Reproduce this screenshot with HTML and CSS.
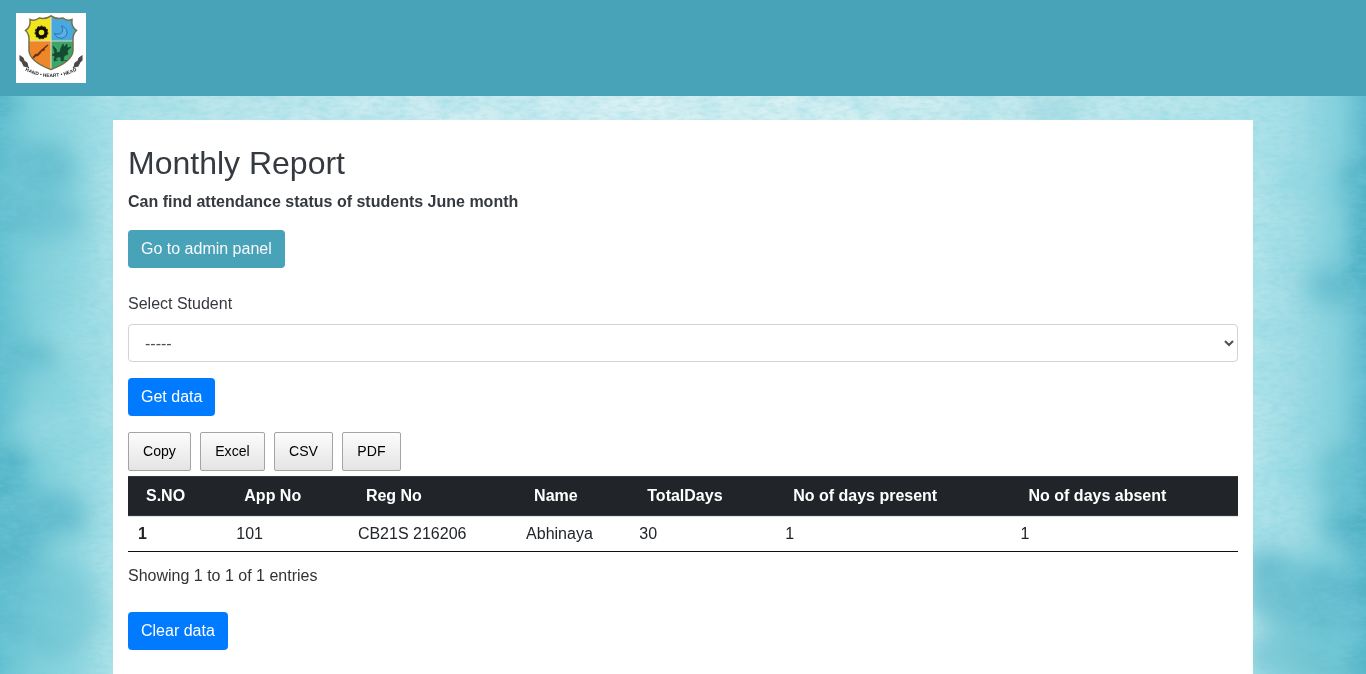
FILE: index.html
```html
<!DOCTYPE html>
<html lang="en">
<head>
<meta charset="utf-8">
<title>Monthly Report</title>
<link rel="stylesheet" href="styles.css">
</head>
<body>
<svg class="backdrop" viewBox="0 0 1366 674" preserveAspectRatio="none" aria-hidden="true">
  <defs>
    <linearGradient id="wash">
      <stop offset="0" stop-color="#62bfcf"/>
      <stop offset=".025" stop-color="#80d0db"/>
      <stop offset=".055" stop-color="#92d8e1"/>
      <stop offset=".08" stop-color="#abe1e8"/>
      <stop offset=".2" stop-color="#c3e9ee"/>
      <stop offset=".35" stop-color="#d2eef2"/>
      <stop offset=".55" stop-color="#dbf2f4"/>
      <stop offset=".75" stop-color="#c6eaee"/>
      <stop offset=".92" stop-color="#b2e4eb"/>
      <stop offset=".95" stop-color="#a0dce5"/>
      <stop offset=".98" stop-color="#84d0dc"/>
      <stop offset="1" stop-color="#5db8cc"/>
    </linearGradient>
    <filter id="soft" x="-50%" y="-50%" width="200%" height="200%"><feGaussianBlur stdDeviation="11"/></filter>
    <filter id="blotch" x="0" y="0" width="100%" height="100%">
      <feTurbulence type="fractalNoise" baseFrequency=".022 .035" numOctaves="5" seed="8"/>
      <feColorMatrix values="0 0 0 0 .22  0 0 0 0 .66  0 0 0 0 .75  1.8 0 0 0 -.7"/>
    </filter>
    <filter id="grain" x="0" y="0" width="100%" height="100%">
      <feTurbulence type="fractalNoise" baseFrequency=".1 .26" numOctaves="3" seed="4"/>
      <feColorMatrix values="0 0 0 0 .2  0 0 0 0 .6  0 0 0 0 .7  1 0 0 0 -.4"/>
    </filter>
  </defs>
  <rect width="1366" height="674" fill="url(#wash)"/>
  <g filter="url(#soft)">
    <g fill="#48acc2">
      <ellipse cx="45" cy="170" rx="32" ry="28" opacity=".5"/>
      <ellipse cx="45" cy="218" rx="42" ry="22" opacity=".4"/>
      <ellipse cx="0" cy="105" rx="12" ry="40" opacity=".6"/>
      <ellipse cx="28" cy="355" rx="30" ry="14" opacity=".5"/>
      <ellipse cx="8" cy="475" rx="26" ry="24" opacity=".8"/>
      <ellipse cx="50" cy="515" rx="38" ry="24" opacity=".6"/>
      <ellipse cx="15" cy="545" rx="28" ry="28" opacity=".55"/>
      <ellipse cx="50" cy="610" rx="50" ry="50" opacity=".3"/>
      <ellipse cx="1362" cy="185" rx="24" ry="24" opacity=".65"/>
      <ellipse cx="1370" cy="250" rx="22" ry="38" opacity=".75"/>
      <ellipse cx="1335" cy="285" rx="30" ry="20" opacity=".5"/>
      <ellipse cx="1345" cy="475" rx="28" ry="30" opacity=".45"/>
      <ellipse cx="1355" cy="525" rx="32" ry="24" opacity=".7"/>
      <ellipse cx="1265" cy="563" rx="25" ry="15" opacity=".6"/>
      <ellipse cx="1310" cy="595" rx="65" ry="35" opacity=".6"/>
      <ellipse cx="1310" cy="655" rx="65" ry="30" opacity=".45"/>
      <ellipse cx="1050" cy="110" rx="28" ry="9" opacity=".3"/>
    </g>
    <g fill="#b2e4eb">
      <ellipse cx="92" cy="330" rx="42" ry="22" opacity=".4"/>
      <ellipse cx="45" cy="425" rx="32" ry="18" opacity=".3"/>
    </g>
  </g>
  <rect width="1366" height="674" filter="url(#blotch)" opacity=".38"/>
  <rect width="1366" height="674" filter="url(#grain)" opacity=".6"/>
</svg>

<header class="navbar">
  <svg class="logo" viewBox="0 0 70 70" role="img" aria-label="School crest">
    <defs>
      <clipPath id="shield"><path d="M14 6.500Q19 8.500 23 5Q30 6.500 35 2.800Q40 6.500 47 5Q51 8.500 56 6.500Q55 14 60.500 17.500Q56.500 21 57 28V38C56 47 46 52.500 35 56.500C24 52.500 14 47 13 38V28Q13.500 21 9.500 17.500Q15 14 14 6.500Z"/></clipPath>
      <filter id="smooth"><feGaussianBlur stdDeviation=".35"/></filter>
    </defs>
    <rect width="70" height="70" fill="#fff"/>
    <g filter="url(#smooth)">
      <g clip-path="url(#shield)">
        <path fill="#f3e51c" d="M8 0h27v28H8z"/>
        <path fill="#48a9df" d="M35 0h27v28H35z"/>
        <path fill="#ee862b" d="M8 28h27v30H8z"/>
        <path fill="#3aa667" d="M35 28h27v30H35z"/>
        <path d="M35 3v54M9 28h52" stroke="#d9dcc0" stroke-width="1.200"/>
      </g>
      <path d="M14 6.500Q19 8.500 23 5Q30 6.500 35 2.800Q40 6.500 47 5Q51 8.500 56 6.500Q55 14 60.500 17.500Q56.500 21 57 28V38C56 47 46 52.500 35 56.500C24 52.500 14 47 13 38V28Q13.500 21 9.500 17.500Q15 14 14 6.500Z" fill="none" stroke="#77704a" stroke-width="1.500"/>
      <circle cx="25.500" cy="19.500" r="4.500" fill="none" stroke="#111" stroke-width="3.400"/>
      <circle cx="25.500" cy="19.500" r="6.300" fill="none" stroke="#222" stroke-width="1.200" stroke-dasharray="2 1.500"/>
      <path d="M45.500 13c3 5 0 10-7 7.500 2 6 11 6.500 12.500 0 .5-4-2.500-7-5.500-7.500z" fill="#58b2e6" stroke="#246c9c" stroke-width=".9"/>
      <path d="M17 45l5-4 4-4 6-5M19 42l4-1 2-3 3-1 1-3M21 43l4-4M17 45l3-4" fill="none" stroke="#6b3214" stroke-width="1.500"/>
      <path d="M37 33l3 3 1 4 3-1 1-4 2-4 1 3 3-3 0 4 4-1-4 4 1 3-4 2-1 5-2 0 0-4-4 0-2 4-1-1 1-4-3-1 3-2zM38 48l4-1M47 47l4 1" fill="#174a30" stroke="#174a30" stroke-width=".8"/>
      <path d="M4 43l3 2 1 3 3 2 1 4-4-1-2-4-2-2zM7 50l6 5M66 43l-3 2-1 3-3 2-1 4 4-1 2-4 2-2zM63 50l-6 5" fill="#4c4848" stroke="#4c4848" stroke-width="1.100"/>
      <path id="motto" d="M9 57.500Q35 70.500 61 57.500" fill="none"/>
      <text class="motto"><textPath href="#motto" textLength="54">HAND • HEART • HEAD</textPath></text>
    </g>
  </svg>
</header>

<main class="panel">
  <h2>Monthly Report</h2>
  <p class="lead">Can find attendance status of students June month</p>
  <a class="btn btn-teal">Go to admin panel</a>
  <form class="student-form">
    <label for="student">Select Student</label>
    <select id="student" class="form-control"><option>-----</option></select>
    <button type="button" class="btn btn-primary">Get data</button>
  </form>
  <div class="exports">
    <button>Copy</button><button>Excel</button><button>CSV</button><button>PDF</button>
  </div>
  <table class="report">
    <colgroup><col class="c-sno"><col class="c-app"><col class="c-reg"><col class="c-name"><col class="c-total"><col class="c-present"><col></colgroup>
    <thead><tr><th>S.NO</th><th>App No</th><th>Reg No</th><th>Name</th><th>TotalDays</th><th>No of days present</th><th>No of days absent</th></tr></thead>
    <tbody><tr><th>1</th><td>101</td><td>CB21S 216206</td><td>Abhinaya</td><td>30</td><td>1</td><td>1</td></tr></tbody>
  </table>
  <p class="info">Showing 1 to 1 of 1 entries</p>
  <button class="btn btn-primary">Clear data</button>
</main>
</body>
</html>
```
FILE: styles.css
```css
*, *::before, *::after { box-sizing: border-box; }
body {
  margin: 0;
  font: 16px/24px "Liberation Sans", Arial, sans-serif;
  color: #212529;
}
.backdrop { position: fixed; inset: 0; width: 100%; height: 100%; z-index: -1; }
.navbar { display: flex; align-items: center; height: 96px; padding: 0 16px; background: #48a2b8; }
.logo { display: block; width: 70px; height: 70px; }
.motto { font: bold 4.8px "Liberation Sans", sans-serif; fill: #222; }
.panel {
  width: 1140px;
  margin: 24px auto 0;
  padding: 24px 15px;
  background: #fff;
  color: #343a40;
}
h2 { margin: 0 0 8px; font-size: 32px; font-weight: 500; line-height: 38px; }
.lead { margin: 0 0 16px; font-weight: bold; }
.btn {
  display: inline-block;
  height: 38px;
  padding: 6px 12px;
  border: 1px solid transparent;
  border-radius: 4px;
  font: inherit;
  color: #fff;
  vertical-align: top;
}
.btn-teal { background: #48a2b8; color: #f8f9fa; }
.btn-primary { background: #007bff; }
.student-form { display: flex; flex-direction: column; align-items: flex-start; margin-top: 24px; }
.student-form label { margin-bottom: 8px; }
.form-control {
  width: 100%;
  height: 38px;
  margin-bottom: 16px;
  padding: 6px 12px;
  border: 1px solid #ced4da;
  border-radius: 4px;
  background: #fff;
  font: inherit;
  color: #495057;
}
.exports { display: flex; gap: 9.36px; margin: 16px 0 5px; }
.exports button {
  height: 39px;
  padding: 0 14px 2px;
  border: 1px solid #a4a4a4;
  border-radius: 2px;
  background: linear-gradient(#fcfcfc, #e4e4e4);
  font: 14.08px/22px "Liberation Sans", Arial, sans-serif;
  color: #000;
}
.report { width: 100%; table-layout: fixed; border-collapse: separate; border-spacing: 0; color: #212529; border-bottom: 1px solid #111; }
.report th, .report td { text-align: left; white-space: nowrap; }
.report thead th { height: 40px; padding: 0 18px; background: #212529; color: #fff; border-top: 1px solid #32383e; border-bottom: 1px solid #32383e; }
.report tbody th, .report tbody td { height: 35px; padding: 0 10px; border-top: 1px solid #dee2e6; }
.c-sno { width: 98.3px; }
.c-app { width: 121.6px; }
.c-reg { width: 168.2px; }
.c-name { width: 113.2px; }
.c-total { width: 145.9px; }
.c-present { width: 235.4px; }
.info { margin: 12px 0 24px; color: #333; }
```
